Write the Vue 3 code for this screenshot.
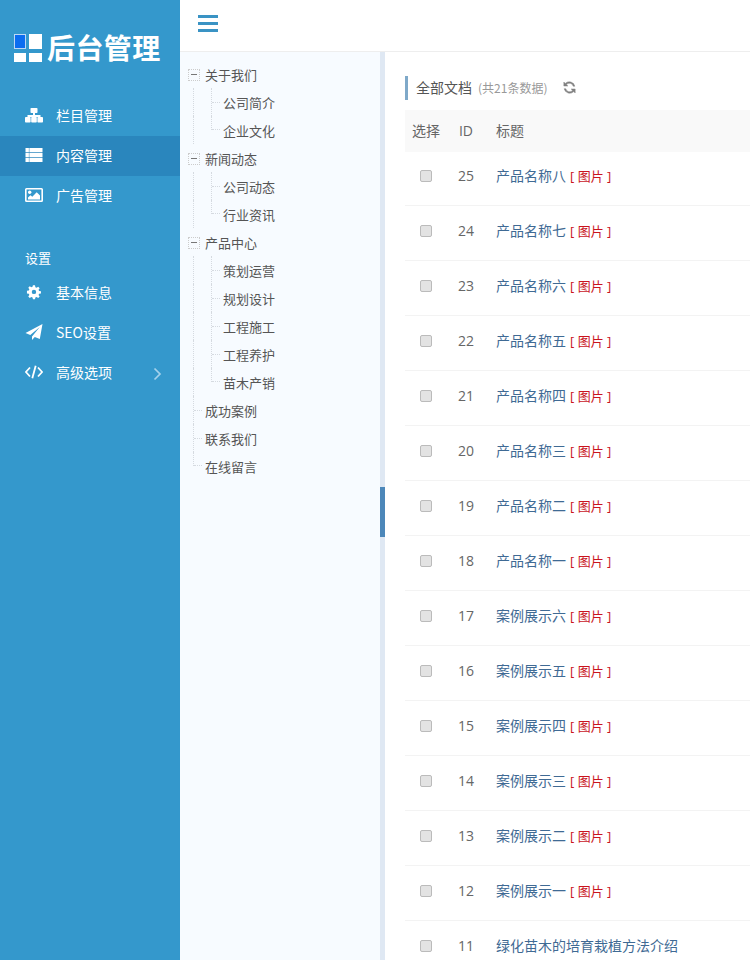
<script setup>
const menuTop = [
  { label: '栏目管理', icon: 'sitemap' },
  { label: '内容管理', icon: 'list', active: true },
  { label: '广告管理', icon: 'picture' }
]
const menuSet = [
  { label: '基本信息', icon: 'cog' },
  { label: 'SEO设置', icon: 'plane' },
  { label: '高级选项', icon: 'code', arrow: true }
]
const tree = [
  { label: '关于我们', kids: ['公司简介', '企业文化'] },
  { label: '新闻动态', kids: ['公司动态', '行业资讯'] },
  { label: '产品中心', kids: ['策划运营', '规划设计', '工程施工', '工程养护', '苗木产销'] },
  { label: '成功案例', kids: [] },
  { label: '联系我们', kids: [] },
  { label: '在线留言', kids: [], last: true }
]
const rows = [
  [25, '产品名称八', 1], [24, '产品名称七', 1], [23, '产品名称六', 1], [22, '产品名称五', 1],
  [21, '产品名称四', 1], [20, '产品名称三', 1], [19, '产品名称二', 1], [18, '产品名称一', 1],
  [17, '案例展示六', 1], [16, '案例展示五', 1], [15, '案例展示四', 1], [14, '案例展示三', 1],
  [13, '案例展示二', 1], [12, '案例展示一', 1], [11, '绿化苗木的培育栽植方法介绍', 0]
]
</script>

<template>
  <div class="page">
    <aside class="side">
      <div class="logo">
        <span class="marks">
          <i class="m blue"></i><i class="m"></i><i class="m low"></i><i class="m low"></i>
        </span>
        <span class="logo-text">后台管理</span>
      </div>
      <nav class="nav">
        <a v-for="m in menuTop" :key="m.label" class="nav-item" :class="{ active: m.active }">
          <svg class="ico" viewBox="0 0 18 16" fill="#fff">
            <template v-if="m.icon === 'sitemap'">
              <rect x="5.500" y="1" width="7" height="5" rx=".8" />
              <path d="M8 6h2v2h5.500v2.500h-2V10H10v.5H8V10H4.500v.5h-2V8H8z" />
              <rect x="0" y="10" width="5.600" height="5.500" rx=".8" />
              <rect x="6.200" y="10" width="5.600" height="5.500" rx=".8" />
              <rect x="12.400" y="10" width="5.600" height="5.500" rx=".8" />
            </template>
            <template v-else-if="m.icon === 'list'">
              <rect x="0.500" y="1" width="17" height="4.200" />
              <rect x="0.500" y="5.900" width="17" height="4.200" />
              <rect x="0.500" y="10.800" width="17" height="4.200" />
              <rect x="3.800" y="1" width=".8" height="14" fill="#2a86bd" opacity=".6" />
            </template>
            <template v-else>
              <path fill-rule="evenodd" d="M1.500 1h15A1.500 1.500 0 0 1 18 2.500v11a1.500 1.500 0 0 1-1.500 1.500h-15A1.500 1.500 0 0 1 0 13.500v-11A1.500 1.500 0 0 1 1.500 1zM1.600 2.400v11.200h14.800V2.400z" />
              <circle cx="4.700" cy="5.300" r="1.700" />
              <path d="M3 12.500v-2l2.500-2.300 1.800 1.600 4.400-4.500 3.300 3.300v3.900z" />
            </template>
          </svg>
          <span>{{ m.label }}</span>
        </a>
      </nav>
      <div class="nav-title">设置</div>
      <nav class="nav">
        <a v-for="m in menuSet" :key="m.label" class="nav-item">
          <svg class="ico" viewBox="0 0 18 16" fill="#fff">
            <template v-if="m.icon === 'cog'">
              <path fill-rule="evenodd" d="M7.900 .8h2.200l.4 2 1.300.55 1.700-1.150 1.550 1.550-1.150 1.700.55 1.300 2 .4v2.200l-2 .4-.55 1.300 1.150 1.700-1.550 1.550-1.700-1.150-1.300.55-.4 2H7.900l-.4-2-1.300-.55-1.700 1.150-1.550-1.550 1.150-1.700-.55-1.300-2-.4V6.650l2-.4.55-1.300-1.150-1.700L4.500 1.700l1.700 1.150 1.300-.55zM9 5.400a2.350 2.350 0 1 0 0 4.700 2.350 2.350 0 0 0 0-4.700z" transform="translate(0.500 .6) scale(.94)" />
            </template>
            <path v-else-if="m.icon === 'plane'" d="M17.500 0 14.800 15l-5-2-2.800 3v-3.600L14.800 3 5.300 11.100 .5 9.100z" />
            <g v-else fill="none" stroke="#fff" stroke-width="1.800">
              <path d="M5 3.500.9 8 5 12.500" />
              <path d="M13 3.500 17.100 8 13 12.500" />
              <path d="M10.700 1.800 7.300 14.200" />
            </g>
          </svg>
          <span>{{ m.label }}</span>
          <svg v-if="m.arrow" class="chev" viewBox="0 0 9 14" fill="none" stroke="#a5d2ec" stroke-width="1.700">
            <path d="M1.500 1.500 7 7l-5.500 5.500" />
          </svg>
        </a>
      </nav>
    </aside>

    <div class="body">
      <header class="top">
        <div class="burger"><i></i><i></i><i></i></div>
      </header>
      <div class="panes">
        <div class="tree">
          <template v-for="n in tree" :key="n.label">
            <div class="t-row">
              <span v-if="n.kids.length" class="toggle"><i></i></span>
              <span v-else class="leaf-root" :class="{ end: n.last }"></span>
              <span class="t-label">{{ n.label }}</span>
            </div>
            <div v-for="(k, i) in n.kids" :key="k" class="t-row kid">
              <span class="trunk"></span>
              <span class="leaf" :class="{ end: n.kids.length - 1 === i }"></span>
              <span class="t-label">{{ k }}</span>
            </div>
          </template>
        </div>
        <div class="split"><span class="handle"></span></div>
        <main class="main">
          <div class="head">
            <span class="head-title">全部文档</span>
            <span class="head-count">(共21条数据)</span>
            <svg class="refresh" viewBox="0 0 14 14" fill="#808080" stroke="#808080" stroke-width=".5">
              <path d="M12.800 5.600h-1.800A4.200 4.200 0 0 0 3.700 3.900l1.500 1.500H.9V1.100l1.500 1.500a6.200 6.200 0 0 1 10.400 3z" />
              <path d="M1.200 8.400H3a4.200 4.200 0 0 0 7.300 1.700L8.800 8.600h4.300v4.300l-1.500-1.500a6.200 6.200 0 0 1-10.400-3z" />
            </svg>
          </div>
          <div class="tr th">
            <span class="c-sel">选择</span>
            <span class="c-id">ID</span>
            <span class="c-title">标题</span>
          </div>
          <div v-for="r in rows" :key="r[0]" class="tr">
            <span class="c-sel"><i class="check"></i></span>
            <span class="c-id">{{ r[0] }}</span>
            <span class="c-title link">{{ r[1] }}<em v-if="r[2]" class="pic">[ 图片 ]</em></span>
          </div>
        </main>
      </div>
    </div>
  </div>
</template>

<style>
html, body { margin: 0; height: 960px; overflow: hidden; background: #fff; }
</style>

<style scoped>
.page {
  display: flex;
  width: 750px;
  height: 960px;
  overflow: hidden;
  font-family: "Noto Sans CJK SC", "Open Sans", sans-serif;
  font-size: 14px;
  color: #555;
}
.side {
  width: 180px;
  flex: none;
  background: #3498cc;
  color: #fff;
}
.logo {
  display: flex;
  align-items: center;
  height: 96px;
  padding-left: 14px;
}
.marks {
  display: grid;
  grid-template-columns: 12px 13px;
  grid-template-rows: 15px 9px;
  gap: 4px 3px;
}
.m { display: block; background: #fff; }
.m.blue { background: #0b6df0; box-shadow: inset 0 0 0 1px #bcd8f5; }
.logo-text {
  margin-left: 5px;
  margin-top: -2px;
  font-size: 28px;
  line-height: 32px;
  font-weight: 700;
  letter-spacing: .4px;
  white-space: nowrap;
}
.nav-item {
  display: flex;
  align-items: center;
  height: 40px;
  box-sizing: border-box;
  padding: 0 0 2px 25px;
  font-size: 14px;
  position: relative;
}
.nav-item.active { background: #2a86bd; }
.ico { width: 18px; height: 16px; margin-right: 13px; flex: none; }
.chev {
  position: absolute;
  left: 153px;
  top: 14px;
  width: 9px;
  height: 14px;
}
.nav-title {
  margin-top: 33px;
  height: 24px;
  line-height: 18px;
  padding-left: 25px;
  font-size: 13px;
}
.body { flex: 1; min-width: 0; display: flex; flex-direction: column; }
.top {
  flex: none;
  background: #fff;
  border-bottom: 1px solid #eee;
  display: flex;
  align-items: flex-start;
  padding: 15px 0 0 18px;
  height: 36px;
}
.burger { display: flex; flex-direction: column; gap: 4px; width: 20px; }
.burger i { display: block; height: 3px; background: #3a93c4; }
.panes { flex: 1; display: flex; min-height: 0; }
.tree {
  width: 200px;
  flex: none;
  background: #f7fbff;
  box-sizing: border-box;
  padding-top: 8px;
}
.t-row {
  position: relative;
  display: flex;
  align-items: center;
  height: 28px;
  padding-left: 25px;
  font-size: 13px;
  color: #555;
}
.t-row.kid { padding-left: 43px; }
.t-label { white-space: nowrap; }
.toggle {
  position: absolute;
  left: 8px;
  top: 9px;
  width: 10px;
  height: 10px;
  border: 1px dotted #ccc;
}
.toggle i { position: absolute; left: 2px; top: 4px; width: 6px; height: 1px; background: #777; }
.trunk {
  position: absolute;
  left: 13px;
  top: 0;
  bottom: 0;
  border-left: 1px dotted #d5dae0;
}
.leaf {
  position: absolute;
  left: 31px;
  top: 0;
  bottom: 0;
  width: 8px;
  border-left: 1px dotted #d5dae0;
}
.leaf.end { bottom: 14px; }
.leaf::after {
  content: "";
  position: absolute;
  left: 0;
  top: 14px;
  width: 8px;
  border-top: 1px dotted #d5dae0;
}
.leaf.end::after { top: auto; bottom: 0; }
.leaf-root {
  position: absolute;
  left: 13px;
  top: 0;
  bottom: 0;
  width: 8px;
  border-left: 1px dotted #d5dae0;
}
.leaf-root.end { bottom: 14px; }
.leaf-root::after {
  content: "";
  position: absolute;
  left: 0;
  top: 14px;
  width: 8px;
  border-top: 1px dotted #d5dae0;
}
.leaf-root.end::after { top: auto; bottom: 0; }
.split {
  position: relative;
  width: 5px;
  flex: none;
  background: #dfe8f3;
}
.handle {
  position: absolute;
  left: 0;
  top: 435px;
  width: 5px;
  height: 50px;
  background: #4c87b9;
}
.main {
  flex: 1;
  min-width: 0;
  background: #fff;
  padding: 24px 0 0 20px;
}
.head {
  display: flex;
  align-items: center;
  height: 24px;
  box-sizing: border-box;
  padding: 0 0 2px 8px;
  margin-bottom: 10px;
  border-left: 3px solid #7fa9c9;
}
.head-title { font-size: 14px; color: #555; }
.head-count { font-size: 12px; color: #999; margin-left: 6px; }
.refresh { width: 13px; height: 13px; margin-left: 16px; }
.tr {
  display: flex;
  align-items: flex-start;
  height: 55px;
  box-sizing: border-box;
  padding-top: 14px;
  border-bottom: 1px solid #f3f3f3;
  line-height: 22px;
  font-family: "Open Sans", "Noto Sans CJK SC", sans-serif;
  color: #666;
}
.th {
  height: 42px;
  padding-top: 10px;
  background: #f9f9f9;
  border-bottom: 0;
}
.th + .tr { height: 54px; padding-top: 13px; }
.c-sel { width: 42px; flex: none; text-align: center; display: flex; justify-content: center; }
.c-id { width: 38px; flex: none; text-align: center; }
.c-title { padding-left: 11px; white-space: nowrap; }
.link { color: #3f6a94; }
.check {
  display: block;
  width: 10px;
  height: 10px;
  margin-top: 5px;
  background: #e3e3e3;
  border: 1px solid #bbb;
  border-radius: 2px;
}
.pic {
  font-style: normal;
  font-size: 13px;
  color: #c9151e;
  margin-left: 4px;
}
</style>
